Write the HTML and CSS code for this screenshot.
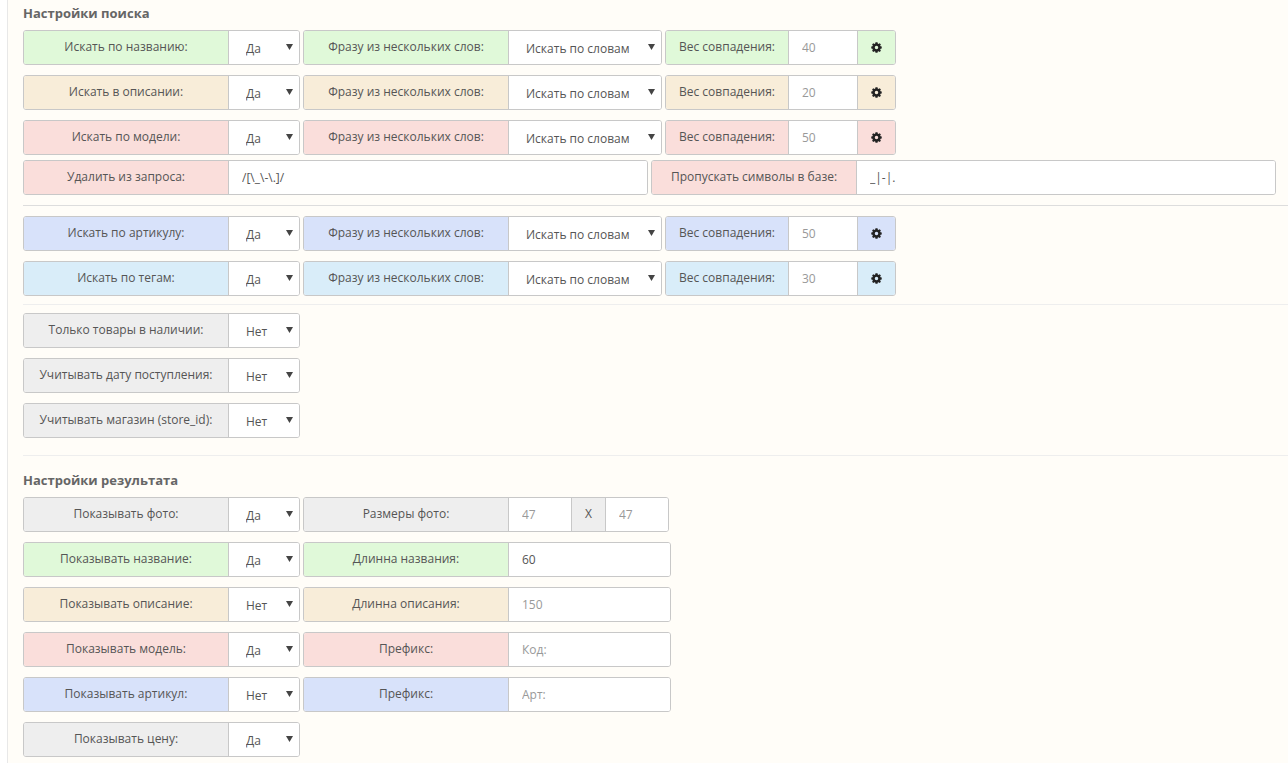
FILE: index.html
```html
<!DOCTYPE html>
<html lang="ru">
<head>
    <meta charset="UTF-8">
    <meta name="viewport" content="width=device-width, initial-scale=1.0">
    <title>Настройки поиска</title>
    <link rel="stylesheet" href="styles.css">
</head>
<body>
    <!-- Gear icon used by the option buttons -->
    <svg class="sprite" width="0" height="0" aria-hidden="true">
        <symbol id="gear" viewBox="0 0 12 12">
            <path fill-rule="evenodd" d="M4.9.3h2.2l.3 1.4.8.4 1.3-.8 1.3 1.3-.8 1.2.4.9 1.3.2v2.2l-1.3.3-.4.8.8 1.3-1.3 1.3-1.3-.8-.8.4-.3 1.3H4.9l-.3-1.3-.8-.4-1.3.8-1.3-1.3.8-1.3-.4-.8L.3 7.1V4.9l1.3-.2.4-.9-.8-1.2 1.3-1.3 1.3.8.8-.4zM6 4.1a1.9 1.9 0 1 0 0 3.8 1.9 1.9 0 0 0 0-3.8z"/>
        </symbol>
    </svg>

    <form class="panel">
        <!-- Search settings -->
        <h2 class="title">Настройки поиска</h2>
        <div class="row green">
            <div class="group">
                <label for="nameOn">Искать по названию:</label>
                <select id="nameOn" class="short"><option>Да</option><option>Нет</option></select>
            </div>
            <div class="group">
                <label for="namePhrase">Фразу из нескольких слов:</label>
                <select id="namePhrase" class="long"><option>Искать по словам</option></select>
            </div>
            <div class="group">
                <label for="nameWeight" class="weight-label">Вес совпадения:</label>
                <input type="text" id="nameWeight" class="weight" placeholder="40">
                <button type="button" aria-label="Настройки"><svg class="icon"><use href="#gear"/></svg></button>
            </div>
        </div>
        <div class="row beige">
            <div class="group">
                <label for="descOn">Искать в описании:</label>
                <select id="descOn" class="short"><option>Да</option><option>Нет</option></select>
            </div>
            <div class="group">
                <label for="descPhrase">Фразу из нескольких слов:</label>
                <select id="descPhrase" class="long"><option>Искать по словам</option></select>
            </div>
            <div class="group">
                <label for="descWeight" class="weight-label">Вес совпадения:</label>
                <input type="text" id="descWeight" class="weight" placeholder="20">
                <button type="button" aria-label="Настройки"><svg class="icon"><use href="#gear"/></svg></button>
            </div>
        </div>
        <div class="row red with-details">
            <div class="group">
                <label for="modelOn">Искать по модели:</label>
                <select id="modelOn" class="short"><option>Да</option><option>Нет</option></select>
            </div>
            <div class="group">
                <label for="modelPhrase">Фразу из нескольких слов:</label>
                <select id="modelPhrase" class="long"><option>Искать по словам</option></select>
            </div>
            <div class="group">
                <label for="modelWeight" class="weight-label">Вес совпадения:</label>
                <input type="text" id="modelWeight" class="weight" placeholder="50">
                <button type="button" aria-label="Настройки"><svg class="icon"><use href="#gear"/></svg></button>
            </div>
        </div>
        <div class="row red details">
            <div class="group">
                <label for="modelRemove">Удалить из запроса:</label>
                <input type="text" id="modelRemove" class="fill" value="/[\_\-\.]/">
            </div>
            <div class="group">
                <label for="modelSkip">Пропускать символы в базе:</label>
                <input type="text" id="modelSkip" class="fill" value="_|-|.">
            </div>
        </div>
        <hr class="dark">
        <div class="row blue">
            <div class="group">
                <label for="skuOn">Искать по артикулу:</label>
                <select id="skuOn" class="short"><option>Да</option><option>Нет</option></select>
            </div>
            <div class="group">
                <label for="skuPhrase">Фразу из нескольких слов:</label>
                <select id="skuPhrase" class="long"><option>Искать по словам</option></select>
            </div>
            <div class="group">
                <label for="skuWeight" class="weight-label">Вес совпадения:</label>
                <input type="text" id="skuWeight" class="weight" placeholder="50">
                <button type="button" aria-label="Настройки"><svg class="icon"><use href="#gear"/></svg></button>
            </div>
        </div>
        <div class="row cyan last">
            <div class="group">
                <label for="tagOn">Искать по тегам:</label>
                <select id="tagOn" class="short"><option>Да</option><option>Нет</option></select>
            </div>
            <div class="group">
                <label for="tagPhrase">Фразу из нескольких слов:</label>
                <select id="tagPhrase" class="long"><option>Искать по словам</option></select>
            </div>
            <div class="group">
                <label for="tagWeight" class="weight-label">Вес совпадения:</label>
                <input type="text" id="tagWeight" class="weight" placeholder="30">
                <button type="button" aria-label="Настройки"><svg class="icon"><use href="#gear"/></svg></button>
            </div>
        </div>
        <hr>
        <div class="row">
            <div class="group">
                <label for="inStock">Только товары в наличии:</label>
                <select id="inStock" class="short"><option>Нет</option><option>Да</option></select>
            </div>
        </div>
        <div class="row">
            <div class="group">
                <label for="useDate">Учитывать дату поступления:</label>
                <select id="useDate" class="short"><option>Нет</option><option>Да</option></select>
            </div>
        </div>
        <div class="row">
            <div class="group">
                <label for="useStore">Учитывать магазин (store_id):</label>
                <select id="useStore" class="short"><option>Нет</option><option>Да</option></select>
            </div>
        </div>
        <hr class="section-end">

        <!-- Result settings -->
        <h2 class="title">Настройки результата</h2>
        <div class="row">
            <div class="group">
                <label for="showPhoto">Показывать фото:</label>
                <select id="showPhoto" class="short"><option>Да</option><option>Нет</option></select>
            </div>
            <div class="group">
                <label for="photoWidth">Размеры фото:</label>
                <input type="text" id="photoWidth" class="size" placeholder="47">
                <span class="times">X</span>
                <input type="text" class="size" placeholder="47" aria-label="Высота фото">
            </div>
        </div>
        <div class="row green">
            <div class="group">
                <label for="showName">Показывать название:</label>
                <select id="showName" class="short"><option>Да</option><option>Нет</option></select>
            </div>
            <div class="group">
                <label for="nameLength">Длинна названия:</label>
                <input type="text" id="nameLength" class="medium" value="60">
            </div>
        </div>
        <div class="row beige">
            <div class="group">
                <label for="showDesc">Показывать описание:</label>
                <select id="showDesc" class="short"><option>Нет</option><option>Да</option></select>
            </div>
            <div class="group">
                <label for="descLength">Длинна описания:</label>
                <input type="text" id="descLength" class="medium" placeholder="150">
            </div>
        </div>
        <div class="row red">
            <div class="group">
                <label for="showModel">Показывать модель:</label>
                <select id="showModel" class="short"><option>Да</option><option>Нет</option></select>
            </div>
            <div class="group">
                <label for="modelPrefix">Префикс:</label>
                <input type="text" id="modelPrefix" class="medium" placeholder="Код:">
            </div>
        </div>
        <div class="row blue">
            <div class="group">
                <label for="showSku">Показывать артикул:</label>
                <select id="showSku" class="short"><option>Нет</option><option>Да</option></select>
            </div>
            <div class="group">
                <label for="skuPrefix">Префикс:</label>
                <input type="text" id="skuPrefix" class="medium" placeholder="Арт:">
            </div>
        </div>
        <div class="row last">
            <div class="group">
                <label for="showPrice">Показывать цену:</label>
                <select id="showPrice" class="short"><option>Да</option><option>Нет</option></select>
            </div>
        </div>
    </form>
</body>
</html>
```
FILE: styles.css
```css
* {
    box-sizing: border-box;
}
body {
    margin: 0;
    font-family: "Open Sans", sans-serif;
    font-size: 12px;
    line-height: 17px;
    color: #555;
    background-color: #fff;
}
.sprite {
    position: absolute;
}
.panel {
    min-height: 100vh;
    margin-left: 7px;
    padding: 4px 0 6px 15px;
    border-left: 1px solid #e8e8e8;
    background-color: #fffdf8;
}
.title {
    margin: 0 0 8px;
    font-size: 13px;
    line-height: 18px;
    font-weight: bold;
    color: #666;
}
hr {
    height: 1px;
    margin: 8px 0;
    border: none;
    background-color: #eee;
}
hr.dark {
    margin: 10px 0;
    background-color: #ddd;
}
hr.section-end {
    margin: 17px 0 15px;
}

/* Rows and input groups */
.row {
    --tone: #eee;
    display: flex;
    gap: 3px;
    margin-bottom: 10px;
}
.row.last {
    margin-bottom: 0;
}
.row.with-details {
    margin-bottom: 5px;
}
.row.details {
    margin-right: 12px;
}
.details .group {
    flex: 1;
}
.green { --tone: #e0f9d9; }
.beige { --tone: #f8edd9; }
.red { --tone: #fadedb; }
.blue { --tone: #d8e2fa; }
.cyan { --tone: #d9edf9; }

.group {
    display: flex;
    height: 35px;
    border: 1px solid #c8c8c8;
    border-radius: 3px;
    background-color: #fff;
    overflow: hidden;
}
.group > * + * {
    border-left: 1px solid #c8c8c8;
}
label,
.times {
    flex: none;
    width: 204px;
    padding: 7px 0 9px;
    text-align: center;
    background-color: var(--tone);
}
label.weight-label {
    width: 122px;
}
.times {
    width: 34px;
}

/* Controls */
input,
select,
button {
    margin: 0;
    border: 0;
    border-radius: 0;
    font-family: inherit;
    font-size: 12px;
    line-height: 17px;
    color: #555;
}
input {
    padding: 8px 13px;
    background-color: #fff;
}
input::placeholder {
    color: #999;
    opacity: 1;
}
select {
    appearance: none;
    padding: 9px 17px 7px;
    background: #fff url("data:image/svg+xml,%3Csvg xmlns='http://www.w3.org/2000/svg' width='7' height='6'%3E%3Cpath d='M0 0h7L3.5 6z' fill='%23444'/%3E%3C/svg%3E") no-repeat right 6px top 13px;
}
button {
    display: flex;
    align-items: center;
    justify-content: center;
    width: 38px;
    padding: 0;
    color: #222;
    background-color: var(--tone);
    cursor: pointer;
}
.icon {
    width: 11px;
    height: 11px;
    fill: currentColor;
}
.short { width: 71px; }
.long { width: 153px; }
.weight { width: 69px; }
.size { width: 63px; }
.medium { width: 162px; }
.fill {
    flex: 1;
    min-width: 0;
}
```
